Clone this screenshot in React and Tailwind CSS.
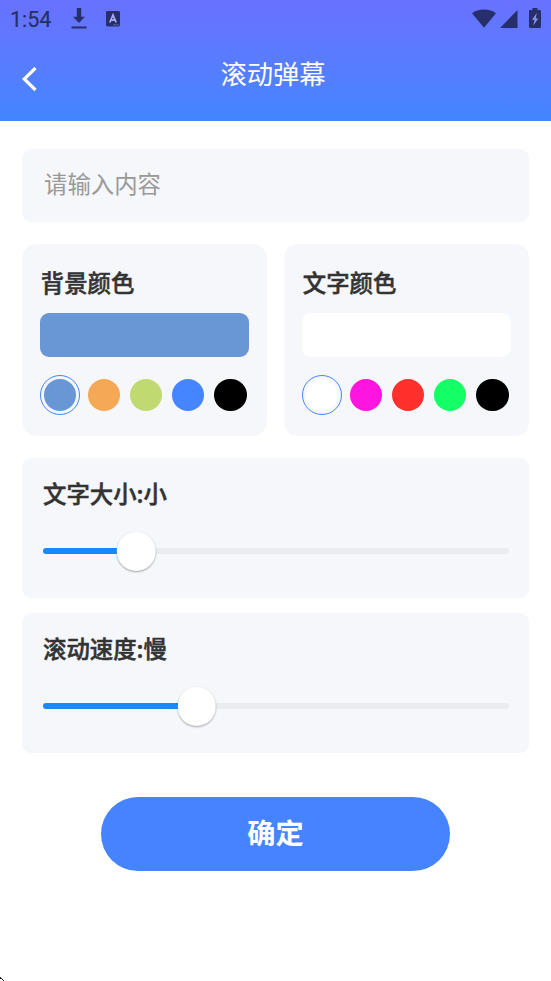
import { useState } from 'react';

const BG_COLORS = ['#6997d5', '#f5a855', '#c0d970', '#4585ff', '#000000'];
const TEXT_COLORS = ['#ffffff', '#ff14e0', '#ff312d', '#14ff66', '#000000'];

const StatusBar = () => (
  <div className="flex h-[38px] items-center pl-[10px] pr-[10px] text-[#272f6b]">
    <span className="w-[61px] pt-px font-['Roboto',sans-serif] text-[21.5px] leading-[38px] [-webkit-text-stroke:0.2px]">
      1:54
    </span>
    <svg className="mb-px h-[21px] w-[16px]" viewBox="0 0 16 21" fill="currentColor">
      <path d="M5.8 0h4.4v8.8h3.8L8 15 2 8.8h3.8zM.5 18.4h15v2.1H.5z" />
    </svg>
    <svg className="mb-px ml-[19px] h-[16px] w-[14px]" viewBox="0 0 14 16">
      <rect width="14" height="15.5" rx="1.4" fill="currentColor" />
      <path d="M3.8 11.5 7 4l3.2 7.5M5 9.2h4" fill="none" stroke="#a8aef0" strokeWidth="1.7" />
      <path d="M7.5 13.8h1M9.5 13.8h1M11.5 13.8h1" stroke="#a8aef0" strokeWidth="0.8" />
    </svg>
    <div className="flex-1" />
    <svg className="mb-[2px] h-[19px] w-[24px]" viewBox="0 0 24 19" fill="currentColor">
      <path d="M0 4.2Q5 .5 12 .5t12 3.7L12 18.8z" />
    </svg>
    <svg className="mb-px ml-[4px] h-[18px] w-[18px]" viewBox="0 0 18 18" fill="currentColor">
      <path d="M17.5 0v18H0z" />
    </svg>
    <svg className="mb-[2px] ml-[11px] h-[20px] w-[12px]" viewBox="0 0 12 20">
      <path d="M3.5 0h5v2H11a1 1 0 0 1 1 1v16a1 1 0 0 1-1 1H1a1 1 0 0 1-1-1V3a1 1 0 0 1 1-1h2.5z" fill="currentColor" />
      <path d="M7.8 5 3 11.8h2.6L4.2 17.4l5-7H6.6z" fill="#8f95f6" />
    </svg>
  </div>
);

const ColorCard = ({ title, colors, value, onChange }) => (
  <section className="h-[192px] w-[245px] rounded-[14px] bg-[#f5f7fb] px-[18px] pt-[20px]">
    <h2 className="pl-[0.8px] text-[23.4px] leading-9 font-medium text-[#333] [-webkit-text-stroke:0.5px]">{title}</h2>
    <div className="mt-[13px] h-[43.5px] rounded-[9px]" style={{ backgroundColor: value }} />
    <div className="mt-[18.7px] flex h-[40px] items-center gap-[9.7px]">
      {colors.map((color) =>
        color === value ? (
          <button
            key={color}
            className="-mr-[2.2px] flex size-[40px] shrink-0 items-center justify-center rounded-full border border-[#4585ff]"
          >
            <span className="size-[32.5px] rounded-full" style={{ backgroundColor: color }} />
          </button>
        ) : (
          <button
            key={color}
            className="size-[32.5px] shrink-0 rounded-full"
            style={{ backgroundColor: color }}
            onClick={() => onChange(color)}
          />
        )
      )}
    </div>
  </section>
);

const SliderCard = ({ label, value, onChange }) => {
  const handleClick = (e) => {
    const rect = e.currentTarget.getBoundingClientRect();
    onChange(((e.clientX - rect.left) / rect.width) * 100);
  };

  return (
    <section className="h-[140px] rounded-[9px] bg-[#f5f7fb] pr-[20.5px] pl-[21px] pt-[17px]">
      <h2 className="text-[23.4px] leading-9 font-medium text-[#333] [-webkit-text-stroke:0.5px]">{label}</h2>
      <div className="relative mt-[21px] flex h-[38px] items-center" onClick={handleClick}>
        <div className="h-[6px] w-full overflow-hidden rounded-full bg-[#ebecf0]">
          <div className="h-full bg-[#1989fa]" style={{ width: `${value}%` }} />
        </div>
        <div
          className="absolute top-0 size-[38.5px] -translate-x-1/2 rounded-full bg-white shadow-[0_1px_2px_rgba(0,0,0,0.35)]"
          style={{ left: `${value}%` }}
        />
      </div>
    </section>
  );
};

export default function App() {
  const [content, setContent] = useState('');
  const [bgColor, setBgColor] = useState(BG_COLORS[0]);
  const [textColor, setTextColor] = useState(TEXT_COLORS[0]);
  const [size, setSize] = useState(20);
  const [speed, setSpeed] = useState(33);

  const sizeLabel = size < 34 ? '小' : size < 67 ? '中' : '大';
  const speedLabel = speed < 34 ? '慢' : speed < 67 ? '中' : '快';

  return (
    <div className="relative h-[981px] w-[551px] overflow-hidden bg-white font-['Noto_Sans_CJK_SC',sans-serif]">
      <header className="h-[120.5px] bg-linear-to-b from-[#6971ff] to-[#4186ff]">
        <StatusBar />
        <div className="flex h-[70px] items-center pl-[22px]">
          <svg className="mt-[11px] h-[26px] w-[16px]" viewBox="0 0 16 26" fill="none" stroke="#fff" strokeWidth="3.2">
            <path d="M13.5 2 2.2 13l11.3 11" />
          </svg>
          <h1 className="flex-1 pr-[43px] text-center text-[26.3px] leading-[68px] text-white">滚动弹幕</h1>
        </div>
      </header>

      <main className="px-[22px] pt-[28.5px]">
        <input
          className="block h-[73px] w-full rounded-[9px] bg-[#f5f7fb] pb-[5px] pl-[22px] text-[23.4px] text-[#333] outline-none placeholder:text-[#999]"
          placeholder="请输入内容"
          value={content}
          onChange={(e) => setContent(e.target.value)}
        />

        <div className="mt-[22px] flex justify-between">
          <ColorCard title="背景颜色" colors={BG_COLORS} value={bgColor} onChange={setBgColor} />
          <ColorCard title="文字颜色" colors={TEXT_COLORS} value={textColor} onChange={setTextColor} />
        </div>

        <div className="mt-[22px] flex flex-col gap-[15px]">
          <SliderCard label={`文字大小:${sizeLabel}`} value={size} onChange={setSize} />
          <SliderCard label={`滚动速度:${speedLabel}`} value={speed} onChange={setSpeed} />
        </div>

        <button className="mx-auto mt-[44px] block h-[73.5px] w-[349px] rounded-full bg-[#4684ff] pb-[4px] text-[28.2px] leading-[69px] font-bold text-white">
          确定
        </button>
      </main>

      {/* tip of the pointer at the window corner */}
      <svg className="absolute bottom-0 left-0 h-[5px] w-[5px]" viewBox="0 0 5 5">
        <path d="M0 1h1v1h1v1H0zM2 3h1v1H2zM3 4h1v1H3z" fill="#222" />
      </svg>
    </div>
  );
}
